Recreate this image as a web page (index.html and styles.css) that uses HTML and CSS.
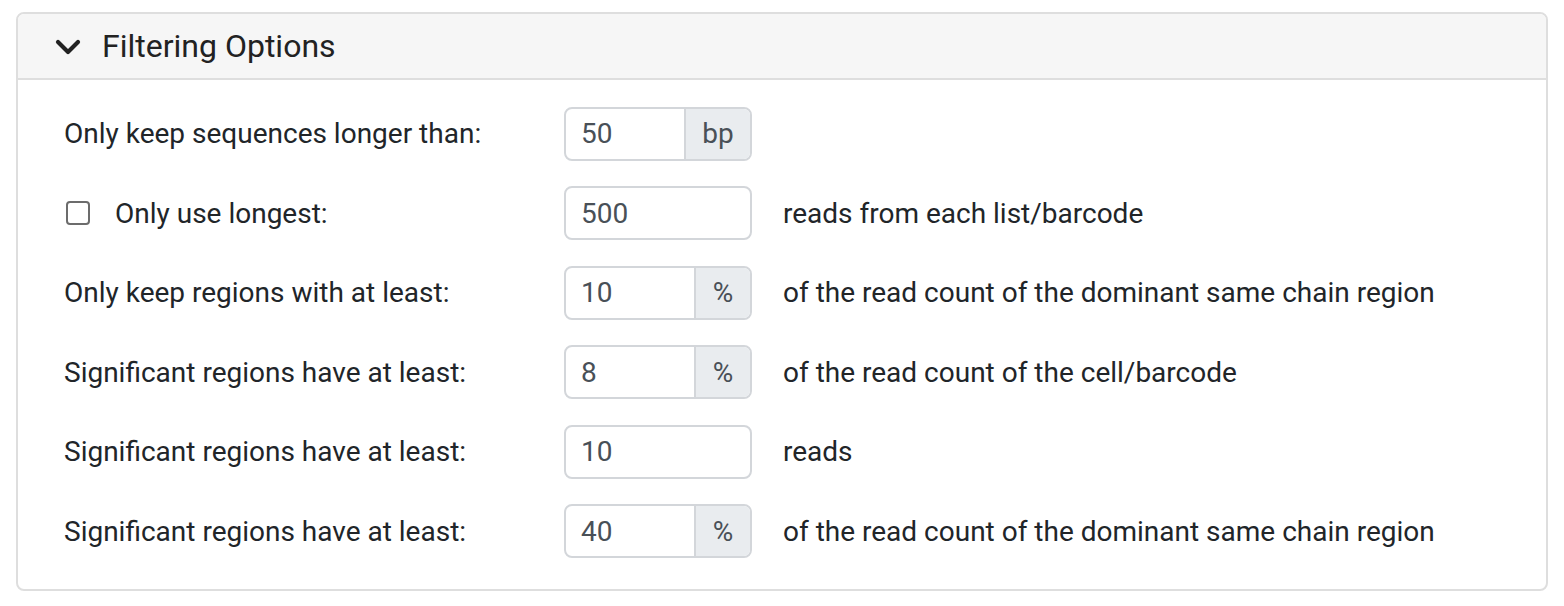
FILE: index.html
```html
<!DOCTYPE html>
<html>
<head>
<meta charset="utf-8">
<link rel="stylesheet" href="styles.css">
</head>
<body>
<div class="card">
  <div class="card-header">
    <svg class="chev" width="26" height="18" viewBox="0 0 26 18"><polyline points="3,4 13,14 23,4" fill="none" stroke="#222" stroke-width="4.2" stroke-linecap="round" stroke-linejoin="round"/></svg>
    <span class="title">Filtering Options</span>
  </div>
  <div class="card-body">
    <div class="row">
      <div class="label">Only keep sequences longer than:</div>
      <div class="igroup"><div class="ival">50</div><div class="addon addon-bp">bp</div></div>
      <div class="after"></div>
    </div>
    <div class="row">
      <div class="label check"><span class="box"></span><span>Only use longest:</span></div>
      <div class="igroup"><div class="ival">500</div></div>
      <div class="after">reads from each list/barcode</div>
    </div>
    <div class="row">
      <div class="label">Only keep regions with at least:</div>
      <div class="igroup"><div class="ival">10</div><div class="addon">%</div></div>
      <div class="after">of the read count of the dominant same chain region</div>
    </div>
    <div class="row">
      <div class="label">Significant regions have at least:</div>
      <div class="igroup"><div class="ival">8</div><div class="addon">%</div></div>
      <div class="after">of the read count of the cell/barcode</div>
    </div>
    <div class="row">
      <div class="label">Significant regions have at least:</div>
      <div class="igroup"><div class="ival">10</div></div>
      <div class="after">reads</div>
    </div>
    <div class="row">
      <div class="label">Significant regions have at least:</div>
      <div class="igroup"><div class="ival">40</div><div class="addon">%</div></div>
      <div class="after">of the read count of the dominant same chain region</div>
    </div>
  </div>
</div>
</body>
</html>
```
FILE: styles.css
```css
html, body { margin: 0; padding: 0; background: #fff; }
body {
  font-family: Roboto, "Liberation Sans", sans-serif;
  color: #212529;
  padding: 12px 16px 0 16px;
}
.card {
  width: 1532px;
  height: 579px;
  border: 2px solid #dedede;
  border-radius: 8px;
  box-sizing: border-box;
  overflow: hidden;
}
.card-header {
  height: 66px;
  background: #f6f6f6;
  border-bottom: 2px solid #dedede;
  box-sizing: border-box;
  display: flex;
  align-items: center;
  padding-left: 37px;
}
.chev { margin-right: 21px; margin-top: 1px; }
.title { font-size: 32px; color: #222; }
.card-body {
  padding: 27px 0 0 46px;
  display: flex;
  flex-direction: column;
  gap: 26px;
}
.row {
  display: flex;
  align-items: center;
  height: 53.5px;
}
.label {
  width: 500px;
  font-size: 28px;
  color: #212529;
}
.check { display: flex; align-items: center; }
.box {
  width: 24px; height: 24px;
  border: 2px solid #6c6c6c;
  border-radius: 4px;
  box-sizing: border-box;
  margin: 0 25px 0 2px;
}
.igroup {
  width: 188px;
  height: 54px;
  border: 2px solid #d3d6da;
  border-radius: 8px;
  box-sizing: border-box;
  display: flex;
  overflow: hidden;
  font-size: 28px;
  color: #495057;
}
.ival {
  flex: 1;
  display: flex;
  align-items: center;
  padding-left: 15px;
}
.addon {
  width: 54px;
  background: #e9ecef;
  border-left: 2px solid #d3d6da;
  display: flex;
  align-items: center;
  justify-content: center;
  font-size: 28px;
}
.addon-bp { width: 64px; }
.after {
  margin-left: 31px;
  font-size: 28px;
  color: #212529;
}
```
